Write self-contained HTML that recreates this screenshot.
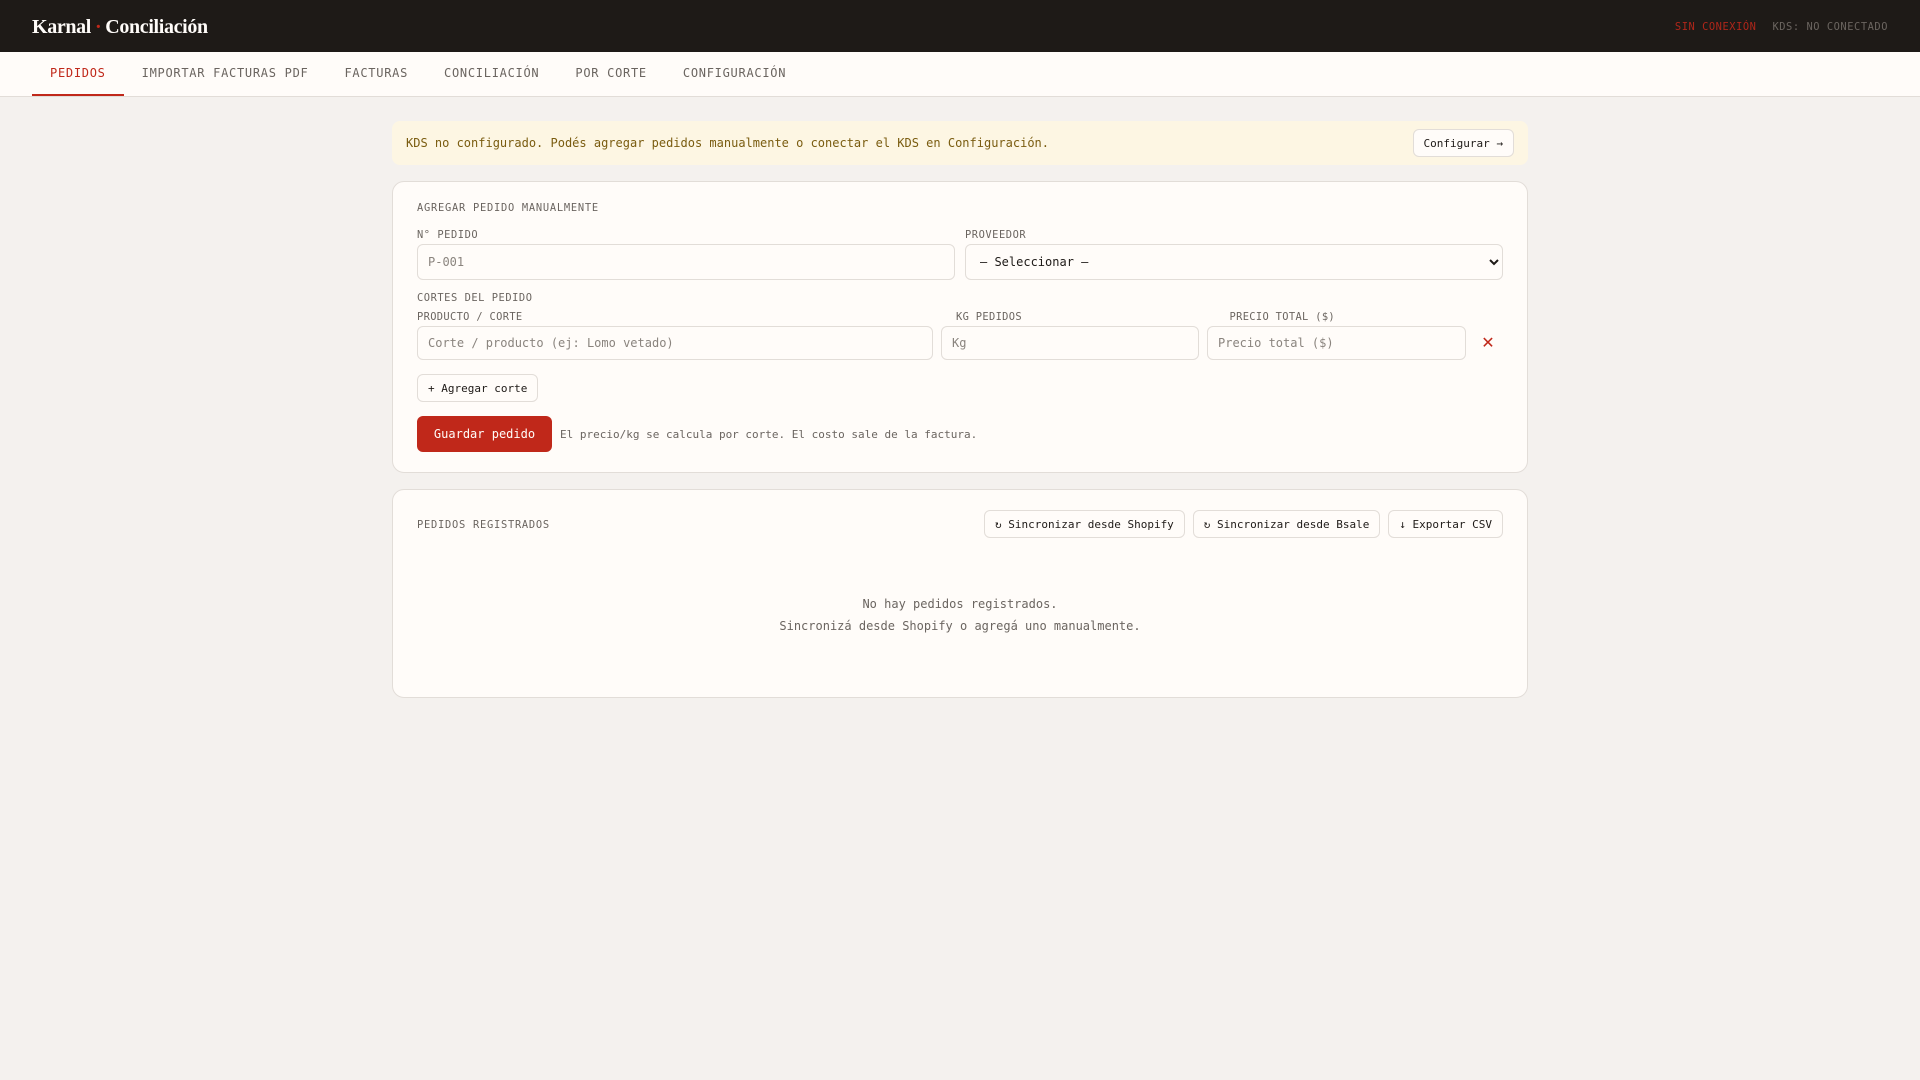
<!DOCTYPE html>
<html lang="es"><head><meta charset="utf-8"><title>Karnal · Conciliación</title>
<style>
*{box-sizing:border-box}
html,body{margin:0;padding:0}
body{width:1920px;height:1080px;overflow:hidden;background:#f4f1ee;color:#1e1a17;font-family:monospace;font-size:12px;position:relative}
header{height:52px;background:#1e1a17;position:relative}
.logo{position:absolute;left:32px;top:15px;font:bold 20px/24px "Liberation Serif",serif;letter-spacing:-.35px;color:#fffcf9;white-space:pre}
.logo span{color:#c0281a;margin:0 -.7px}
.st{position:absolute;right:32px;top:21px;font-size:10.4px;line-height:12px;letter-spacing:.54px;display:flex;gap:16px;color:#6b6560}
.st b{font-weight:400;color:#b0261a}
nav{height:45px;background:#fffcf9;border-bottom:1px solid #e2ddd8;padding-left:32px;display:flex}
nav a{display:block;height:44px;padding:14px 18px 0;font-size:12px;line-height:14px;letter-spacing:.72px;color:#6b6560;border-bottom:2px solid transparent;white-space:nowrap}
nav a.on{color:#c0281a;border-bottom-color:#c0281a}
.banner{position:absolute;left:392px;top:121px;width:1136px;height:44px;background:#fdf6e3;border-radius:8px;padding:8px 14px;display:flex;align-items:center;justify-content:space-between;color:#7a5c10}
.btn{display:inline-block;height:28px;border:1px solid #e2ddd8;background:#fffcf9;border-radius:6px;font:11px/28px monospace;padding:0 10px;color:#1e1a17;white-space:nowrap}
.card{position:absolute;left:392px;width:1136px;background:#fffcf9;border:1px solid #e2ddd8;border-radius:12px}
.t{position:absolute;font-size:10.4px;line-height:12px;letter-spacing:.74px;color:#6b6560;white-space:nowrap}
.l{position:absolute;font-size:10.4px;line-height:12px;letter-spacing:.54px;color:#6b6560;white-space:nowrap}
.h{letter-spacing:.34px}
.i{position:absolute;border:1px solid #e2ddd8;border-radius:6px;background:#fffcf9;font:12px monospace;padding:0 10px;color:#1e1a17;outline:none;margin:0}
.i::placeholder{color:#8a847e;opacity:1}
select.i{padding:0 10px}
.a{position:absolute}
.save{position:absolute;left:24px;top:234px;height:36px;width:135px;background:#c0281a;border-radius:6px;color:#fffcf9;font-size:12px;line-height:36px;text-align:center}
.note{position:absolute;left:167px;top:246px;font-size:11px;line-height:14px;color:#6b6560;white-space:nowrap}
.x{position:absolute;left:1080px;top:144px;width:30px;height:34px;line-height:34px;text-align:center;font-size:16px;color:#c0281a;font-family:"DejaVu Sans",sans-serif}
.empty{position:absolute;left:0;right:0;top:104px;text-align:center;line-height:21.6px;color:#6b6560}
</style></head><body>
<header><div class="logo">Karnal <span>·</span> Conciliación</div>
<div class="st"><b>SIN CONEXIÓN</b><span>KDS: NO CONECTADO</span></div></header>
<nav><a class="on">PEDIDOS</a><a>IMPORTAR FACTURAS PDF</a><a>FACTURAS</a><a>CONCILIACIÓN</a><a>POR CORTE</a><a>CONFIGURACIÓN</a></nav>
<div class="banner"><span>KDS no configurado. Podés agregar pedidos manualmente o conectar el KDS en Configuración.</span><span class="btn">Configurar →</span></div>
<div class="card" style="top:181px;height:292px">
<div class="t" style="left:24px;top:20px">AGREGAR PEDIDO MANUALMENTE</div>
<div class="l" style="left:24px;top:47px">N° PEDIDO</div>
<div class="l" style="left:572px;top:47px">PROVEEDOR</div>
<input class="i" style="left:24px;top:62px;width:538px;height:36px" placeholder="P-001">
<select class="i" style="left:572px;top:62px;width:538px;height:36px"><option>— Seleccionar —</option></select>
<div class="l" style="left:24px;top:110px">CORTES DEL PEDIDO</div>
<div class="l h" style="left:24px;top:129px">PRODUCTO / CORTE</div>
<div class="l h" style="left:563px;top:129px">KG PEDIDOS</div>
<div class="l h" style="left:836.5px;top:129px">PRECIO TOTAL ($)</div>
<input class="i" style="left:24px;top:144px;width:516px;height:34px" placeholder="Corte / producto (ej: Lomo vetado)">
<input class="i" style="left:548px;top:144px;width:258px;height:34px" placeholder="Kg">
<input class="i" style="left:814px;top:144px;width:259px;height:34px" placeholder="Precio total ($)">
<div class="x">✕</div>
<span class="btn a" style="left:24px;top:192px">+ Agregar corte</span>
<div class="save">Guardar pedido</div>
<div class="note">El precio/kg se calcula por corte. El costo sale de la factura.</div>
</div>
<div class="card" style="top:489px;height:209px">
<div class="t" style="left:24px;top:29px">PEDIDOS REGISTRADOS</div>
<span class="btn a" style="left:591px;top:20px">↻ Sincronizar desde Shopify</span>
<span class="btn a" style="left:799.8px;top:20px">↻ Sincronizar desde Bsale</span>
<span class="btn a" style="left:995.3px;top:20px">↓ Exportar CSV</span>
<div class="empty">No hay pedidos registrados.<br>Sincronizá desde Shopify o agregá uno manualmente.</div>
</div>
</body></html>
